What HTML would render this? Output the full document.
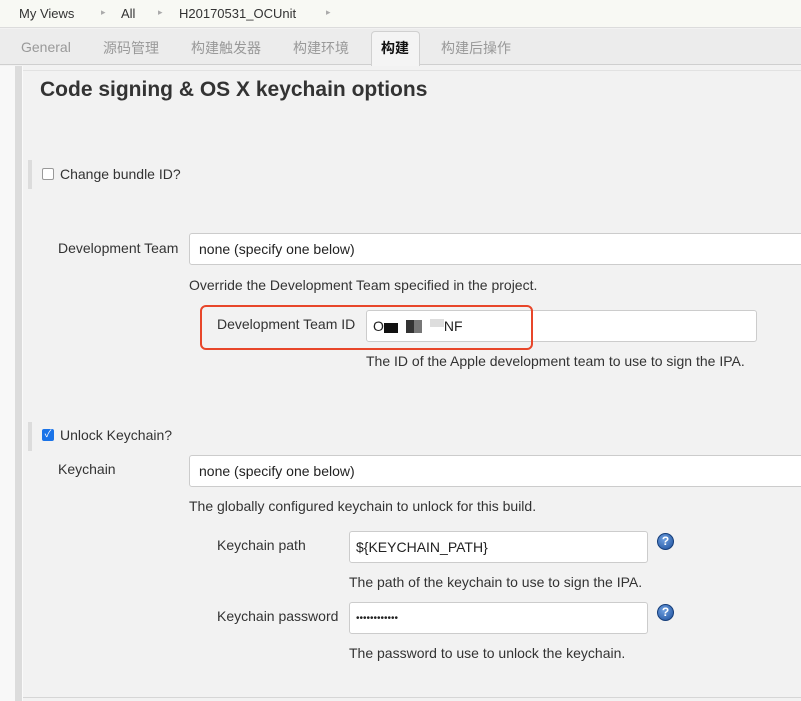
<!DOCTYPE html>
<html><head><meta charset="utf-8"><style>
*{margin:0;padding:0;box-sizing:border-box}
body{width:801px;height:701px;overflow:hidden;background:#f2f2f2;font-family:"Liberation Sans","Noto Sans CJK SC",sans-serif;color:#333;position:relative;font-size:14px}
.a{position:absolute;white-space:nowrap}
.inp{position:absolute;background:#fff;border:1px solid #ccc;border-radius:3px;font-size:14px;padding-left:9px;display:flex;align-items:center;color:#222}
.help{position:absolute;width:17px;height:17px;border-radius:50%;background:radial-gradient(circle at 40% 35%,#6fa0e0,#1c4f9c);border:1px solid #163e7a;color:#fff;font-weight:bold;font-size:12px;text-align:center;line-height:15px}
</style></head><body>
<div class="a" style="left:0;top:0;width:801px;height:28px;background:#f8f9f4;border-bottom:1px solid #dcdcdc"></div>
<div class="a" style="left:19px;top:6px;font-size:13px;color:#333">My Views</div>
<div class="a" style="left:101px;top:7px;font-size:9px;color:#aaa">▸</div>
<div class="a" style="left:121px;top:6px;font-size:13px">All</div>
<div class="a" style="left:158px;top:7px;font-size:9px;color:#aaa">▸</div>
<div class="a" style="left:179px;top:6px;font-size:13px">H20170531_OCUnit</div>
<div class="a" style="left:326px;top:7px;font-size:9px;color:#aaa">▸</div>
<div class="a" style="left:0;top:29px;width:801px;height:36px;background:#ececec;border-bottom:1px solid #cfcfcf"></div>
<div class="a" style="left:21px;top:39px;font-size:14px;color:#999">General</div>
<div class="a" style="left:103px;top:38px;font-size:14px;color:#999">源码管理</div>
<div class="a" style="left:191px;top:38px;font-size:14px;color:#999">构建触发器</div>
<div class="a" style="left:293px;top:38px;font-size:14px;color:#999">构建环境</div>
<div class="a" style="left:371px;top:31px;width:49px;height:35px;background:#f4f4f4;border:1px solid #d0d0d0;border-bottom:none;border-radius:4px 4px 0 0"></div>
<div class="a" style="left:381px;top:38px;font-size:14px;font-weight:bold;color:#111">构建</div>
<div class="a" style="left:441px;top:38px;font-size:14px;color:#999">构建后操作</div>
<div class="a" style="left:0;top:66px;width:15px;height:635px;background:#f8f8f8"></div>
<div class="a" style="left:15px;top:66px;width:7px;height:635px;background:#dcdcdc"></div>
<div class="a" style="left:22px;top:66px;width:1px;height:635px;background:#fafafa"></div>
<div class="a" style="left:23px;top:70px;width:778px;height:1px;background:#e2e2e2"></div>
<div class="a" style="left:23px;top:697px;width:778px;height:1px;background:#d6d6d6"></div>
<div class="a" style="left:40px;top:78px;font-size:21px;font-weight:bold;color:#333">Code signing &amp; OS X keychain options</div>
<div class="a" style="left:28px;top:160px;width:4px;height:29px;background:#dcdcdc"></div>
<div class="a" style="left:42px;top:168px;width:12px;height:12px;border:1px solid #999;border-radius:2px;background:#fff"></div>
<div class="a" style="left:60px;top:166px;font-size:14px">Change bundle ID?</div>
<div class="a" style="left:58px;top:240px">Development Team</div>
<div class="inp" style="left:189px;top:233px;width:620px;height:32px">none (specify one below)</div>
<div class="a" style="left:189px;top:277px">Override the Development Team specified in the project.</div>
<div class="a" style="left:217px;top:316px">Development Team ID</div>
<div class="inp" style="left:366px;top:310px;width:391px;height:32px;padding-left:6px">O<span style="display:inline-block;width:14px;height:10px;background:#111;margin-top:4px"></span><span style="display:inline-block;width:8px"></span><span style="display:inline-block;width:16px;height:13px;background:linear-gradient(90deg,#333 50%,#777 50%)"></span><span style="display:inline-block;width:8px"></span><span style="display:inline-block;width:14px;height:8px;background:#ddd;margin-top:-6px"></span>NF</div>
<div class="a" style="left:200px;top:305px;width:333px;height:45px;border:2px solid #e8462a;border-radius:6px"></div>
<div class="a" style="left:366px;top:353px">The ID of the Apple development team to use to sign the IPA.</div>
<div class="a" style="left:28px;top:422px;width:4px;height:29px;background:#dcdcdc"></div>
<div class="a" style="left:42px;top:429px;width:12px;height:12px;border-radius:2px;background:#1a73e8;color:#fff;font-size:10px;line-height:12px;text-align:center">✓</div>
<div class="a" style="left:60px;top:427px">Unlock Keychain?</div>
<div class="a" style="left:58px;top:461px">Keychain</div>
<div class="inp" style="left:189px;top:455px;width:620px;height:32px">none (specify one below)</div>
<div class="a" style="left:189px;top:498px">The globally configured keychain to unlock for this build.</div>
<div class="a" style="left:217px;top:537px">Keychain path</div>
<div class="inp" style="left:349px;top:531px;width:299px;height:32px;padding-left:6px">${KEYCHAIN_PATH}</div>
<div class="help" style="left:657px;top:533px">?</div>
<div class="a" style="left:349px;top:574px">The path of the keychain to use to sign the IPA.</div>
<div class="a" style="left:217px;top:608px">Keychain password</div>
<div class="inp" style="left:349px;top:602px;width:299px;height:32px;padding-left:6px;font-size:10px;letter-spacing:0px">••••••••••••</div>
<div class="help" style="left:657px;top:604px">?</div>
<div class="a" style="left:349px;top:645px">The password to use to unlock the keychain.</div>
</body></html>
